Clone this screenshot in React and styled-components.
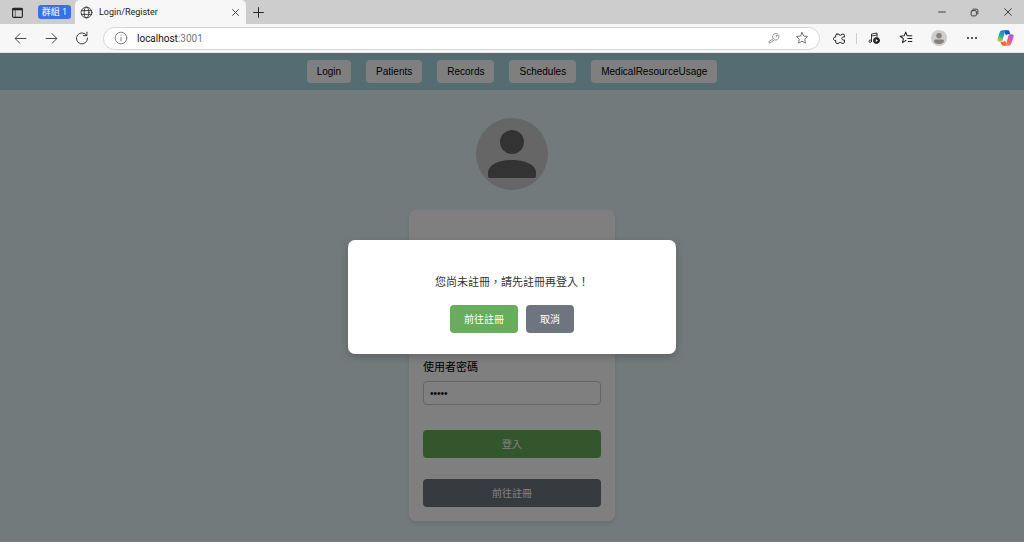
import { useState } from 'react';
import styled, { createGlobalStyle, css } from 'styled-components';

const GlobalStyle = createGlobalStyle`
  * {
    box-sizing: border-box;
  }
  html, body, #root {
    height: 100%;
  }
  body {
    margin: 0;
    background-color: #808080;
    font-family: "Liberation Sans", "Noto Sans CJK TC", sans-serif;
  }
  button {
    font-family: inherit;
    cursor: pointer;
  }
`

const Window = styled.div`
  display: flex;
  flex-direction: column;
  height: 100%;
  padding-bottom: 1px;
`

/* browser chrome */
const TabBar = styled.div`
  display: flex;
  align-items: center;
  flex: none;
  height: 24px;
  padding-left: 10px;
  background-color: #cdcdcd;
  font-family: "Open Sans", "Noto Sans CJK TC", sans-serif;
  color: #222;
`

const IconButton = styled.button`
  display: flex;
  align-items: center;
  justify-content: center;
  flex: none;
  width: ${({ $width }) => $width || 14}px;
  height: 20px;
  padding: 0;
  border: 0;
  background: none;
  color: ${({ $color }) => $color || '#222'};
`

const TabGroup = styled.button`
  flex: none;
  width: 33px;
  height: 14px;
  margin: 0 4px 0 14px;
  padding: 0;
  border: 0;
  border-radius: 3px;
  background-color: #3b6fe8;
  color: #fff;
  font-size: 9px;
  line-height: 14px;
`

const Tab = styled.div`
  display: flex;
  align-items: center;
  gap: 6px;
  width: 171px;
  height: 24px;
  padding: 0 4px 0 5px;
  border-radius: 5px 5px 0 0;
  background-color: #f7f7f7;
`

const TabTitle = styled.span`
  flex: 1;
  font-family: Roboto, sans-serif;
  font-size: 9px;
  line-height: 14px;
`

const WindowButtons = styled.div`
  display: flex;
  margin-left: auto;
`

const Toolbar = styled.div`
  display: flex;
  align-items: center;
  flex: none;
  height: 29px;
  padding: 0 10px 0 13px;
  border-bottom: 1px solid #e4e4e4;
  background-color: #f7f7f7;
`

const ToolGroup = styled.div`
  display: flex;
  align-items: center;
  gap: ${({ $gap }) => $gap}px;
`

const AddressBar = styled.div`
  display: flex;
  align-items: center;
  flex: 1;
  gap: 9px;
  height: 23px;
  margin: 0 12px 0 14px;
  padding: 0 10px;
  border: 1px solid #d6d6d6;
  border-radius: 12px;
  background-color: #fff;
  color: #666;
  font-family: Roboto, sans-serif;
  font-size: 10px;
`

const Address = styled.span`
  flex: 1;
  color: #111;
  > span {
    color: #777;
  }
`

const Divider = styled.span`
  width: 1px;
  height: 11px;
  background-color: #cfcfcf;
`

/* page */
const Page = styled.div`
  position: relative;
  flex: 1;
  min-height: 0;
  overflow: hidden;
  background-color: #e6f5f8;
`

const Nav = styled.nav`
  display: flex;
  justify-content: center;
  gap: 15px;
  padding: 7px;
  background-color: #add8e6;
`

const NavButton = styled.button`
  height: 23px;
  padding: 0 10px;
  border: 0;
  border-radius: 4px;
  background-color: #fff;
  color: #000;
  font-size: 10px;
`

const Main = styled.main`
  display: flex;
  flex-direction: column;
  align-items: center;
  gap: 20px;
  padding: 28px 0 20px;
`

const Avatar = styled.div`
  display: flex;
  align-items: center;
  justify-content: center;
  width: 72px;
  height: 72px;
  border-radius: 50%;
  background-color: #ccc;
  color: #666;
`

const Card = styled.form`
  display: flex;
  flex-direction: column;
  justify-content: flex-end;
  gap: 21px;
  width: 206px;
  min-height: 311px;
  padding: 14px;
  border-radius: 7px;
  background-color: #fff;
  box-shadow: 0 3px 6px rgba(0, 0, 0, 0.1);
`

const Field = styled.div`
  display: flex;
  flex-direction: column;
  gap: 6px;
  margin-bottom: 4px;
  label {
    font-size: 11px;
    line-height: 16px;
    color: #000;
  }
  input {
    height: 24px;
    padding: 0 6px;
    border: 1px solid #ccc;
    border-radius: 4px;
    background-color: #fff;
    color: #000;
    font-family: inherit;
    font-size: 10px;
  }
`

const Button = styled.button`
  height: 28px;
  padding: 0 14px 1px;
  border: 0;
  border-radius: 4px;
  color: #fff;
  font-size: 10px;
  ${({ $variant }) => css`
    background-color: ${$variant === 'green' ? '#67ad5b' : '#6f757e'};
  `}
`

const Overlay = styled.div`
  position: absolute;
  inset: 0;
  display: flex;
  align-items: center;
  justify-content: center;
  background-color: rgba(0, 0, 0, 0.5);
`

const Modal = styled.div`
  display: flex;
  flex-direction: column;
  align-items: center;
  gap: 14px;
  width: 32%;
  min-width: 220px;
  padding: 34px 21px 21px;
  border-radius: 7px;
  background-color: #fff;
  box-shadow: 0 3px 8px rgba(0, 0, 0, 0.2);
  p {
    margin: 0;
    font-size: 11px;
    line-height: 17px;
    color: #333;
  }
`

const Row = styled.div`
  display: flex;
  gap: 8px;
`

function Icon({ size = 12, stroke = 1.5, children }) {
  return (
    <svg
      width={size}
      height={size}
      viewBox="0 0 24 24"
      fill="none"
      stroke="currentColor"
      strokeWidth={stroke}
      strokeLinecap="round"
      strokeLinejoin="round"
      aria-hidden="true"
    >
      {children}
    </svg>
  );
}

const STAR = 'M12 2.5l2.9 6.1 6.6.9-4.8 4.6 1.2 6.7-5.9-3.2-5.9 3.2 1.2-6.7L2.5 9.5l6.6-.9z';

function CopilotLogo() {
  return (
    <svg width="17" height="16" viewBox="0 0 48 46" aria-hidden="true">
      <defs>
        <linearGradient id="cpA" x1="0.5" y1="0" x2="0.3" y2="1">
          <stop offset="0" stopColor="#1f7fe0" />
          <stop offset="0.5" stopColor="#2fae9a" />
          <stop offset="1" stopColor="#e8c727" />
        </linearGradient>
        <linearGradient id="cpB" x1="0.8" y1="0" x2="0.3" y2="1">
          <stop offset="0" stopColor="#a45be8" />
          <stop offset="0.5" stopColor="#e5569d" />
          <stop offset="1" stopColor="#f58a4b" />
        </linearGradient>
      </defs>
      <path fill="#1c4fc0" d="M20 1h11c3 0 4 2 5 5l2 6h-6c-3 0-5 1-6 4l-2-3z" />
      <path fill="#f0663f" d="M28 45H17c-3 0-4-2-5-5l-2-6h6c3 0 5-1 6-4l2 3z" />
      <path fill="url(#cpA)" d="M15 1h12c-3 0-4 2-5 6l-6 21c-1 4-3 6-7 6H6c-5 0-6-4-5-8L7 8c1-4 4-7 8-7z" />
      <path fill="url(#cpB)" d="M33 45H21c3 0 4-2 5-6l6-21c1-4 3-6 7-6h3c5 0 6 4 5 8l-6 18c-1 4-4 7-8 7z" />
    </svg>
  );
}

function BrowserBar() {
  return (
    <header>
      <TabBar>
        <IconButton aria-label="Tab actions">
          <Icon size={13} stroke={2}>
            <rect x="3" y="4" width="18" height="17" rx="2" />
            <path d="M4 6h16" strokeWidth="4" />
            <path d="M8 8v12" strokeWidth="1" />
          </Icon>
        </IconButton>
        <TabGroup>群組 1</TabGroup>
        <Tab>
          <Icon size={13}>
            <circle cx="12" cy="12" r="10" />
            <ellipse cx="12" cy="12" rx="4.5" ry="10" />
            <path d="M3 8.5h18M3 15.5h18" />
          </Icon>
          <TabTitle>Login/Register</TabTitle>
          <IconButton aria-label="Close tab">
            <Icon size={9} stroke={2.2}><path d="M4 4l16 16M20 4L4 20" /></Icon>
          </IconButton>
        </Tab>
        <IconButton $width={24} aria-label="New tab">
          <Icon size={13} stroke={1.8}><path d="M12 3v18M3 12h18" /></Icon>
        </IconButton>
        <WindowButtons>
          <IconButton $width={33} aria-label="Minimize">
            <Icon size={10} stroke={2}><path d="M4 12h16" /></Icon>
          </IconButton>
          <IconButton $width={33} aria-label="Restore">
            <Icon size={9} stroke={2.2}>
              <rect x="3" y="7" width="14" height="14" rx="3" />
              <path d="M8 3h9a4 4 0 0 1 4 4v9" />
            </Icon>
          </IconButton>
          <IconButton $width={33} aria-label="Close window">
            <Icon size={10} stroke={2}><path d="M4 4l16 16M20 4L4 20" /></Icon>
          </IconButton>
        </WindowButtons>
      </TabBar>
      <Toolbar>
        <ToolGroup $gap={17}>
          <IconButton aria-label="Back">
            <Icon size={13}><path d="M22 12H3M11 3l-9 9 9 9" /></Icon>
          </IconButton>
          <IconButton aria-label="Forward">
            <Icon size={13}><path d="M2 12h19M13 3l9 9-9 9" /></Icon>
          </IconButton>
          <IconButton aria-label="Refresh">
            <Icon size={14}><path d="M20 7.5A9.5 9.5 0 1 0 21.5 12M20.5 2v6h-6" /></Icon>
          </IconButton>
        </ToolGroup>
        <AddressBar>
          <Icon size={14} stroke={1.4}>
            <circle cx="12" cy="12" r="10" />
            <path d="M12 11v6M12 7v.5" />
          </Icon>
          <Address>localhost<span>:3001</span></Address>
          <ToolGroup $gap={14}>
            <IconButton $color="#777" aria-label="Saved passwords">
              <Icon size={12}>
                <path d="M10 13a6.5 6.5 0 1 1 3 2.5L3.500 22H2v-2.500z" />
                <circle cx="17" cy="7.5" r="1" />
              </Icon>
            </IconButton>
            <IconButton $color="#666" aria-label="Add to favorites">
              <Icon size={14}><path d={STAR} /></Icon>
            </IconButton>
          </ToolGroup>
        </AddressBar>
        <ToolGroup $gap={18}>
          <ToolGroup $gap={10}>
            <IconButton aria-label="Extensions">
              <Icon size={13} stroke={1.8}>
                <path d="M7 4h4a2.5 2 0 0 0 5 0h3q2 0 2 2v3.500a3 3 0 1 0 0 5V19q0 2-2 2h-3a2.500 2 0 0 0-5 0H7q-2 0-2-2v-3.500a3.200 3.200 0 1 1 0-6V6q0-2 2-2z" />
              </Icon>
            </IconButton>
            <Divider />
            <IconButton aria-label="Media">
              <Icon size={12} stroke={1.8}>
                <path d="M7 18V4l11-2v7M7 8l11-2" />
                <circle cx="4.5" cy="18.5" r="2.5" />
                <circle cx="17" cy="17" r="6" fill="currentColor" />
                <path d="M15.500 14l4.500 3-4.500 3z" fill="#fff" stroke="none" />
              </Icon>
            </IconButton>
          </ToolGroup>
          <IconButton aria-label="Favorites">
            <Icon size={14} stroke={1.8}>
              <path d="M12 16l-6 4 1.500-7L2 9l7-1 2.500-6L14 8h8M15 13h7M16 18h6" />
            </Icon>
          </IconButton>
          <IconButton $width={16} aria-label="Profile">
            <svg width="16" height="16" viewBox="0 0 32 32" aria-hidden="true">
              <circle cx="16" cy="16" r="16" fill="#cfcdca" />
              <circle cx="16" cy="11.5" r="5.5" fill="#85817d" />
              <path d="M6 22q0-3 3-3h14q3 0 3 3c0 4-5 6-10 6s-10-2-10-6z" fill="#85817d" />
            </svg>
          </IconButton>
          <IconButton aria-label="Settings and more">
            <Icon size={12} stroke={4}><path d="M4 12h.01M12 12h.01M20 12h.01" /></Icon>
          </IconButton>
          <IconButton $width={17} aria-label="Copilot"><CopilotLogo /></IconButton>
        </ToolGroup>
      </Toolbar>
    </header>
  );
}

const links = ['Login', 'Patients', 'Records', 'Schedules', 'MedicalResourceUsage'];

export default function App() {
  const [showModal, setShowModal] = useState(true);
  const [password, setPassword] = useState('12345');

  function handleLogin(e) {
    e.preventDefault();
    setShowModal(true);
  }
  function closeModal() {
    setShowModal(false);
  }

  return (
    <Window>
      <GlobalStyle />
      <BrowserBar />
      <Page>
        <Nav>
          {links.map((link) => <NavButton key={link}>{link}</NavButton>)}
        </Nav>
        <Main>
          <Avatar>
            <svg width="72" height="72" viewBox="0 0 72 72" fill="currentColor" aria-hidden="true">
              <circle cx="36" cy="24" r="12" />
              <path d="M12 55c0-9 12-13 24-13s24 4 24 13v3q0 2-2 2H14q-2 0-2-2z" />
            </svg>
          </Avatar>
          <Card onSubmit={handleLogin}>
            <Field>
              <label htmlFor="password">使用者密碼</label>
              <input
                id="password"
                type="password"
                value={password}
                onChange={(e) => setPassword(e.target.value)}
              />
            </Field>
            <Button type="submit" $variant="green">登入</Button>
            <Button type="button" $variant="gray">前往註冊</Button>
          </Card>
        </Main>
        {showModal && (
          <Overlay>
            <Modal role="dialog" aria-modal="true">
              <p>您尚未註冊，請先註冊再登入！</p>
              <Row>
                <Button $variant="green" onClick={closeModal}>前往註冊</Button>
                <Button $variant="gray" onClick={closeModal}>取消</Button>
              </Row>
            </Modal>
          </Overlay>
        )}
      </Page>
    </Window>
  );
}
